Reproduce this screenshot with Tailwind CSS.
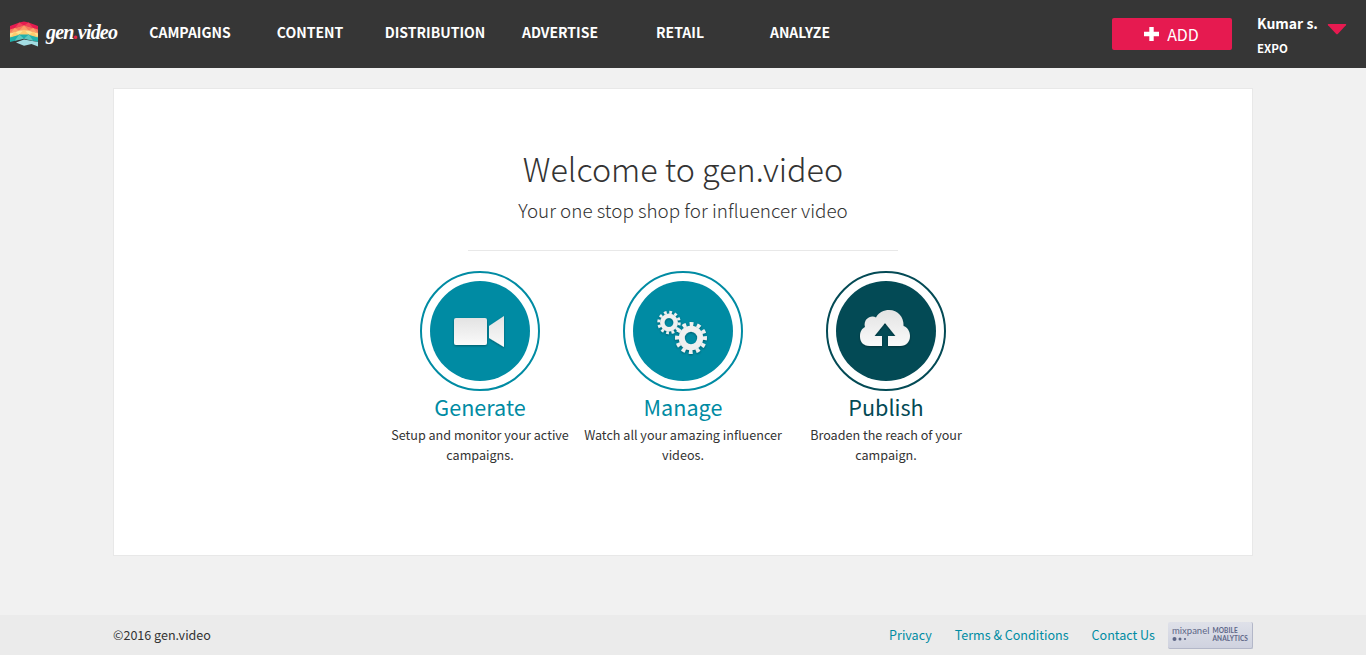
<!DOCTYPE html>
<html lang="en">
<head>
<meta charset="utf-8">
<title>gen.video</title>
<script src="https://cdn.jsdelivr.net/npm/@tailwindcss/browser@4"></script>
</head>
<body class="h-[655px] overflow-hidden bg-[#f1f1f1] font-['Noto_Sans_CJK_SC','Open_Sans',sans-serif] text-[#333] flex flex-col">
<header class="h-[68px] shrink-0 bg-[#363636] text-white flex">
  <a class="w-[130px] pl-[9px] pt-[20px] flex gap-[7px]">
    <svg class="shrink-0" width="30" height="28" viewBox="0 0 30 28">
      <path d="M1 6 10.300 2.500 15 1.500 19.700 2.500 29 6V10L15 5.500 1 10Z" fill="#e51b50"/>
      <path d="M1 9.500 15 5 29 9.500V13.500L15 9.500 1 13.500Z" fill="#f47b5d"/>
      <path d="M1 13 15 9 29 13V17.500L15 13.500 1 17.500Z" fill="#fde391"/>
      <path d="M1 17 15 13 29 17V22L15 18.500 1 22Z" fill="#1fb0ac"/>
      <path d="M7 22.500 15 19.500 29 22V26.500L22.500 24 15 25.700Z" fill="#a3dde3"/>
      <path d="M10.300 2.500 15 5.500 5.700 8.300ZM19.700 2.500 24.300 8.300 15 5.500Z" fill="#ef4358"/>
      <path d="M5.700 8 10.300 10.800 1 13.500ZM15 5.500 19.700 10.500H10.300ZM24.300 8 29 13.500 19.700 10.800Z" fill="#fa9f69"/>
      <path d="M5.700 11.700 10.300 14.800 1 17.500ZM15 9.500 19.700 14.500H10.300ZM24.300 11.700 29 17.500 19.700 14.800Z" fill="#fdcb70"/>
      <path d="M10.300 14.600 15 18.700 5.700 20.800ZM19.700 14.600 24.300 20.800 15 18.700Z" fill="#5cc7c0"/>
    </svg>
    <span class="font-['Liberation_Serif',serif] italic font-bold text-[20px] tracking-[-0.8px] leading-[25px] whitespace-nowrap">gen<span class="text-[#e8264b]">.</span>video</span>
  </a>
  <nav class="flex text-center text-[14px] font-bold leading-[20px] pt-[22px] flex-1">
    <a class="w-[120px]">CAMPAIGNS</a>
    <a class="w-[120px]">CONTENT</a>
    <a class="w-[130px]">DISTRIBUTION</a>
    <a class="w-[120px]">ADVERTISE</a>
    <a class="w-[120px]">RETAIL</a>
    <a class="w-[120px]">ANALYZE</a>
  </nav>
  <button class="w-[120px] h-[32px] mt-[18px] bg-[#e61a50] rounded-[2px] flex items-center justify-center gap-[8px] text-[16px] leading-[24px]">
    <svg width="15" height="14" viewBox="0 0 15 14" class="-ml-px"><path d="M5.300 0h4.400v4.800H15v4.400H9.700V14H5.300V9.200H0V4.800h5.300z" fill="#fff"/></svg>
    <span>ADD</span>
  </button>
  <div class="ml-[25px] w-[70px] pt-[12px] font-bold whitespace-nowrap">
    <div class="text-[14px] leading-[22px]">Kumar s.</div>
    <div class="text-[11.500px] leading-[16px] mt-[6px]">EXPO</div>
  </div>
  <svg class="mt-[23px] mr-[19px]" width="20" height="12" viewBox="0 0 20 12"><path d="M1.500 1h17q1.400 0 .4 1.200L11 10.800q-1 1-2 0L1.100 2.200Q.1 1 1.500 1Z" fill="#e61a50"/></svg>
</header>
<main class="mx-[113px] mt-[20px] h-[468px] shrink-0 bg-white border border-[#e8e8e8] flex flex-col items-center pt-[54px] text-center">
  <h1 class="text-[32.300px] font-light leading-[50px]">Welcome to gen.video</h1>
  <h2 class="text-[18.850px] font-light leading-[30px] mt-[2px]">Your one stop shop for influencer video</h2>
  <div class="w-[430px] h-px bg-[#e8e8e8] mt-[25px]"></div>
  <div class="flex mt-[20px]">
    <section class="w-[203px] flex flex-col items-center text-[#008ba3]">
      <svg width="120" height="120" viewBox="0 0 120 120">
        <defs><linearGradient id="g" x2="0" y2="1"><stop stop-color="#e3e3e3"/><stop offset="1" stop-color="#fafafa"/></linearGradient>
        <filter id="s" x="-20%" y="-20%" width="140%" height="150%"><feDropShadow dx="0" dy="1" stdDeviation="1" flood-opacity=".35"/></filter></defs>
        <circle cx="60" cy="60" r="59" fill="none" stroke="#008ba3" stroke-width="2"/><circle cx="60" cy="60" r="50" fill="#008ba3"/>
        <g fill="url(#g)" filter="url(#s)"><rect x="34" y="47" width="33" height="27" rx="2"/><path d="M69 55 84 45V76L69 67Z"/></g>
      </svg>
      <h3 class="text-[21.600px] leading-[30px] mt-px">Generate</h3>
      <p class="w-[203px] text-[12.600px] leading-[20px] mt-[3px] text-[#333]">Setup and monitor your active<br>campaigns.</p>
    </section>
    <section class="w-[203px] flex flex-col items-center text-[#008ba3]">
      <svg width="120" height="120" viewBox="0 0 120 120">
        <circle cx="60" cy="60" r="59" fill="none" stroke="#008ba3" stroke-width="2"/><circle cx="60" cy="60" r="50" fill="#008ba3"/>
        <g filter="url(#s)" fill="none" stroke="#f0f0f0">
          <circle cx="46" cy="51.500" r="6.700" stroke-width="4.500"/><circle cx="46" cy="51.500" r="10.200" stroke-width="3" stroke-dasharray="2.670 2.670"/>
          <circle cx="68" cy="67" r="9.200" stroke-width="6"/><circle cx="68" cy="67" r="14" stroke-width="4" stroke-dasharray="3.665 3.665" transform="rotate(-7 68 67)"/>
        </g>
      </svg>
      <h3 class="text-[21.600px] leading-[30px] mt-px">Manage</h3>
      <p class="w-[203px] text-[12.600px] leading-[20px] mt-[3px] text-[#333]">Watch all your amazing influencer<br>videos.</p>
    </section>
    <section class="w-[203px] flex flex-col items-center text-[#034a55]">
      <svg width="120" height="120" viewBox="0 0 120 120">
        <circle cx="60" cy="60" r="59" fill="none" stroke="#034a55" stroke-width="2"/><circle cx="60" cy="60" r="50" fill="#034a55"/>
        <path filter="url(#s)" fill="url(#g)" d="M44 75C37 75 34 70.500 34 65.500C34 60.500 36 57.500 39 56C37 48 45 43.500 50 46.500C53 41 58 39 63 39C72 39 78 46 77.500 55C81 56 84 60 84 65C84 71 80 75 74 75H62V65H69.500L59 52 48.500 65H56V75Z"/>
      </svg>
      <h3 class="text-[21.600px] leading-[30px] mt-px">Publish</h3>
      <p class="w-[203px] text-[12.600px] leading-[20px] mt-[3px] text-[#333]">Broaden the reach of your<br>campaign.</p>
    </section>
  </div>
</main>
<footer class="mt-auto h-[40px] bg-[#ebebeb] px-[113px] flex items-center text-[12.550px] leading-[20px]">
  <span class="flex-1">©2016 gen.video</span>
  <div class="flex gap-[23px] text-[#008ba3]"><a>Privacy</a><a>Terms &amp; Conditions</a><a>Contact Us</a></div>
  <div class="ml-[13px] w-[85px] h-[27px] rounded-[2px] bg-linear-to-b from-[#dfe1e9] to-[#cfd2df] border-b border-r border-[#b3b7c8] flex font-['Lato',sans-serif] text-[#5d6687] pl-[4px] pt-[3px] gap-[3px]">
    <div><div class="text-[9.500px] leading-[11px]">mixpanel</div>
    <svg width="16" height="6" viewBox="0 0 16 6" fill="#5d6687"><circle cx="2.500" cy="3" r="2"/><circle cx="8" cy="3" r="1.500"/><circle cx="13" cy="3" r="1.100"/></svg></div>
    <div class="text-[6.500px] font-bold leading-[8px] pt-[2px] tracking-[0.1px]">MOBILE<br>ANALYTICS</div>
  </div>
</footer>
</body>
</html>
